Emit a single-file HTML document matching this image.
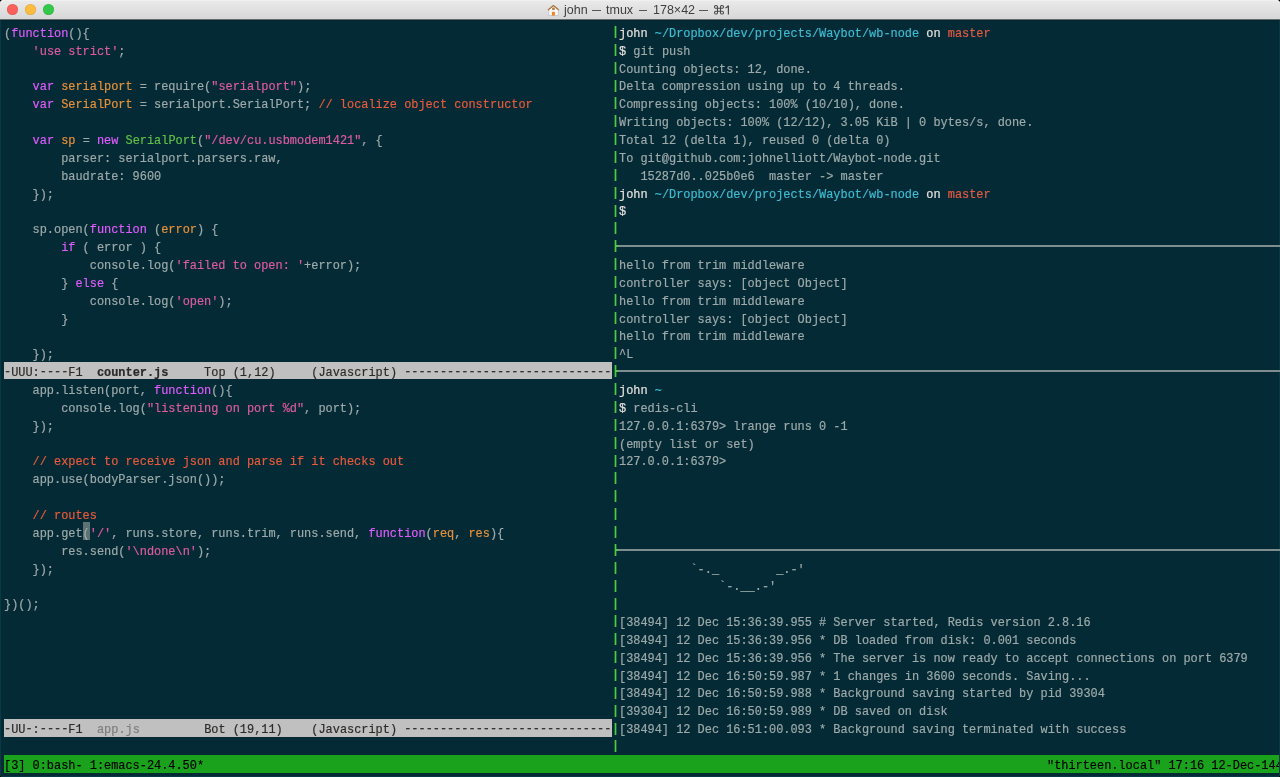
<!DOCTYPE html>
<html><head><meta charset="utf-8"><style>
html,body{margin:0;padding:0;}
body{width:1280px;height:777px;overflow:hidden;position:relative;background:#042a35;font-family:"Liberation Mono",monospace;}
#tb{position:absolute;left:0;top:0;width:1280px;height:19px;background:linear-gradient(#f3f3f3 0px,#e9e9e9 1.5px,#d7d7d7 19px);}
#tbl{position:absolute;left:0;top:19px;width:1280px;height:1px;background:#646c6e;}
#tbl2{position:absolute;left:0;top:20px;width:1280px;height:1px;background:#03252f;}
.tl{position:absolute;top:4px;width:11px;height:11px;border-radius:50%;box-shadow:inset 0 0 0 0.6px rgba(0,0,0,0.12)}
.dash{position:absolute;top:10px;height:1.1px;width:8.6px;background:#555}
.tt{will-change:transform;position:absolute;top:3px;font-family:"Liberation Sans",sans-serif;font-size:12.5px;color:#404040;line-height:14px;white-space:pre}
.row{-webkit-text-stroke:0.18px currentColor;will-change:transform;position:absolute;white-space:pre;font-size:11.910px;line-height:17.86px;height:17.86px;color:#9eaaaa;}
.mlbg{position:absolute;background:#c0c0c0;width:607.50px;}
.v{color:#e05cff} .o{color:#e8913a} .s{color:#de5ba0} .g{color:#5fc046} .c{color:#ea5a3c}
.w{color:#e6e2de} .cy{color:#3fbcd2} .r{color:#e85a44}
.cur{background:#5b6e70;color:#1f3a40}
.md{color:#2c2a28} .dd{color:#2c2a28;position:relative;top:-1px} .mb{color:#2a2a2a;font-weight:bold} .mg{color:#7d7d7d}
.vb{position:absolute;left:615px;width:1px;height:12px;background:#4ccd3e;box-shadow:-1px 0 0 rgba(76,205,62,0.35),1px 0 0 rgba(76,205,62,0.35)}
.hb{position:absolute;left:618px;height:2px;width:662px;background:#7f8d8f;}
.hbg{position:absolute;left:615px;height:2px;width:3px;background:#4ccd3e;}
#sb{position:absolute;left:4.0px;top:755px;width:1275.0px;height:17.6px;background:#1ba21c;overflow:hidden;}
#sb .row{color:#000;top:3px}

#lb{position:absolute;left:0;top:20px;width:1px;height:757px;background:#073a47;}
#rb{position:absolute;left:1279px;top:20px;width:1px;height:757px;background:#073a47;}
#bb{position:absolute;left:0;top:776px;width:1280px;height:1px;background:#073a47;}
.px{position:absolute;width:1px;height:1px}
</style></head><body>
<div id="tb"></div><div id="tbl"></div><div id="tbl2"></div>
<div class="tl" style="left:7px;background:#fc605c"></div>
<div class="tl" style="left:25px;background:#fdbc40"></div>
<div class="tl" style="left:43px;background:#34c84a"></div>
<svg style="position:absolute;left:0;top:0" width="1280" height="19"><path d="M548.6 15.6 L548.6 9.6 L553.4 5.8 L558.4 9.6 L558.4 15.6 Z" fill="#f7f7f9" stroke="#b8b8b8" stroke-width="0.6"/><path d="M548.3 9.7 L553.4 5.6 L558.5 9.7" fill="none" stroke="#a67a42" stroke-width="1.3" stroke-linecap="round" stroke-linejoin="round"/><rect x="552.2" y="7.6" width="2.5" height="2.4" fill="#b07a3e"/><rect x="551.9" y="11.8" width="3" height="3.9" fill="#ef861f"/></svg>
<span class="tt" style="left:563.5px">john</span><div class="dash" style="left:592.3px"></div><span class="tt" style="left:606px">tmux</span><div class="dash" style="left:638.6px"></div><span class="tt" style="left:653px">178×42</span><div class="dash" style="left:699.4px"></div><svg style="position:absolute;left:714px;top:5px" width="10" height="9.6" viewBox="0 0 10 10" preserveAspectRatio="none"><path d="M3.5 6 V2 A1.5 1.5 0 1 0 2 3.5 H8 A1.5 1.5 0 1 0 6.5 2 V8 A1.5 1.5 0 1 0 8 6.5 H2 A1.5 1.5 0 1 0 3.5 8 Z" fill="none" stroke="#4a4a4a" stroke-width="1.05"/></svg><svg style="position:absolute;left:724px;top:4px" width="8" height="12"><path d="M4.4 1.6 V10.4 M1.4 4 Q3.4 3.2 4.4 1.6" fill="none" stroke="#4a4a4a" stroke-width="1.2"/></svg>
<div id="lb"></div><div id="rb"></div><div id="bb"></div><div class="px" style="left:0;top:0;background:#000"></div><div class="px" style="left:1px;top:0;background:#888"></div><div class="px" style="left:0;top:1px;background:#888"></div><div class="px" style="left:1px;top:1px;background:#fff"></div><div class="px" style="left:1279px;top:0;background:#000"></div><div class="px" style="left:1278px;top:0;background:#888"></div><div class="px" style="left:1279px;top:1px;background:#888"></div><div class="px" style="left:1278px;top:1px;background:#fff"></div><div class="px" style="left:0;top:776px;background:#000"></div><div class="px" style="left:1279px;top:776px;background:#000"></div>
<div style="position:absolute;left:82.62px;top:522.48px;width:7.15px;height:17.86px;background:#5d7274"></div><div class="row" style="top:26px;left:4.0px">(<span class="v">function</span>(){</div><div class="row" style="top:44px;left:4.0px">    <span class="s">'use strict'</span>;</div><div class="row" style="top:79px;left:4.0px">    <span class="v">var</span> <span class="o">serialport</span> = require(<span class="s">"serialport"</span>);</div><div class="row" style="top:97px;left:4.0px">    <span class="v">var</span> <span class="o">SerialPort</span> = serialport.SerialPort; <span class="c">// localize object constructor</span></div><div class="row" style="top:133px;left:4.0px">    <span class="v">var</span> <span class="o">sp</span> = <span class="v">new</span> <span class="g">SerialPort</span>(<span class="s">"/dev/cu.usbmodem1421"</span>, {</div><div class="row" style="top:151px;left:4.0px">        parser: serialport.parsers.raw,</div><div class="row" style="top:169px;left:4.0px">        baudrate: 9600</div><div class="row" style="top:187px;left:4.0px">    });</div><div class="row" style="top:222px;left:4.0px">    sp.open(<span class="v">function</span> (<span class="o">error</span>) {</div><div class="row" style="top:240px;left:4.0px">        <span class="v">if</span> ( error ) {</div><div class="row" style="top:258px;left:4.0px">            console.log(<span class="s">'failed to open: '</span>+error);</div><div class="row" style="top:276px;left:4.0px">        } <span class="v">else</span> {</div><div class="row" style="top:294px;left:4.0px">            console.log(<span class="s">'open'</span>);</div><div class="row" style="top:312px;left:4.0px">        }</div><div class="row" style="top:347px;left:4.0px">    });</div><div class="row" style="top:383px;left:4.0px">    app.listen(port, <span class="v">function</span>(){</div><div class="row" style="top:401px;left:4.0px">        console.log(<span class="s">"listening on port %d"</span>, port);</div><div class="row" style="top:419px;left:4.0px">    });</div><div class="row" style="top:454px;left:4.0px">    <span class="c">// expect to receive json and parse if it checks out</span></div><div class="row" style="top:472px;left:4.0px">    app.use(bodyParser.json());</div><div class="row" style="top:508px;left:4.0px">    <span class="c">// routes</span></div><div class="row" style="top:526px;left:4.0px">    app.get(<span class="s">'/'</span>, runs.store, runs.trim, runs.send, <span class="v">function</span>(<span class="o">req</span>, <span class="o">res</span>){</div><div class="row" style="top:544px;left:4.0px">        res.send(<span class="s">'\ndone\n'</span>);</div><div class="row" style="top:562px;left:4.0px">    });</div><div class="row" style="top:597px;left:4.0px">})();</div><div class="mlbg" style="top:361.74px;left:4.0px;height:17.4px"></div><div class="row" style="top:365px;left:4.0px"><span class="dd">-</span><span class="md">UUU:</span><span class="dd">----</span><span class="md">F1  </span><span class="mb">counter.js</span><span class="md">     Top (1,12)     (Javascript) </span><span class="dd">-----------------------------</span></div><div class="mlbg" style="top:718.94px;left:4.0px;height:17.86px"></div><div class="row" style="top:722px;left:4.0px"><span class="dd">-</span><span class="md">UU</span><span class="dd">-</span><span class="md">:</span><span class="dd">----</span><span class="md">F1  </span><span class="mg">app.js</span><span class="md">         Bot (19,11)    (Javascript) </span><span class="dd">-----------------------------</span></div><div class="row" style="top:26px;left:618.64px"><span class="w">john</span> <span class="cy">~/Dropbox/dev/projects/Waybot/wb-node</span> <span class="w">on</span> <span class="r">master</span></div><div class="row" style="top:44px;left:618.64px"><span class="w">$</span> git push</div><div class="row" style="top:62px;left:618.64px">Counting objects: 12, done.</div><div class="row" style="top:79px;left:618.64px">Delta compression using up to 4 threads.</div><div class="row" style="top:97px;left:618.64px">Compressing objects: 100% (10/10), done.</div><div class="row" style="top:115px;left:618.64px">Writing objects: 100% (12/12), 3.05 KiB | 0 bytes/s, done.</div><div class="row" style="top:133px;left:618.64px">Total 12 (delta 1), reused 0 (delta 0)</div><div class="row" style="top:151px;left:618.64px">To git@github.com:johnelliott/Waybot-node.git</div><div class="row" style="top:169px;left:618.64px">   15287d0..025b0e6  master -&gt; master</div><div class="row" style="top:187px;left:618.64px"><span class="w">john</span> <span class="cy">~/Dropbox/dev/projects/Waybot/wb-node</span> <span class="w">on</span> <span class="r">master</span></div><div class="row" style="top:204px;left:618.64px"><span class="w">$</span></div><div class="row" style="top:258px;left:618.64px">hello from trim middleware</div><div class="row" style="top:276px;left:618.64px">controller says: [object Object]</div><div class="row" style="top:294px;left:618.64px">hello from trim middleware</div><div class="row" style="top:312px;left:618.64px">controller says: [object Object]</div><div class="row" style="top:329px;left:618.64px">hello from trim middleware</div><div class="row" style="top:347px;left:618.64px">^L</div><div class="row" style="top:383px;left:618.64px"><span class="w">john</span> <span class="cy">~</span></div><div class="row" style="top:401px;left:618.64px"><span class="w">$</span> redis-cli</div><div class="row" style="top:419px;left:618.64px">127.0.0.1:6379&gt; lrange runs 0 -1</div><div class="row" style="top:437px;left:618.64px">(empty list or set)</div><div class="row" style="top:454px;left:618.64px">127.0.0.1:6379&gt;</div><div class="row" style="top:562px;left:618.64px">          `-._        _.-'</div><div class="row" style="top:579px;left:618.64px">              `-.__.-'</div><div class="row" style="top:615px;left:618.64px">[38494] 12 Dec 15:36:39.955 # Server started, Redis version 2.8.16</div><div class="row" style="top:633px;left:618.64px">[38494] 12 Dec 15:36:39.956 * DB loaded from disk: 0.001 seconds</div><div class="row" style="top:651px;left:618.64px">[38494] 12 Dec 15:36:39.956 * The server is now ready to accept connections on port 6379</div><div class="row" style="top:669px;left:618.64px">[38494] 12 Dec 16:50:59.987 * 1 changes in 3600 seconds. Saving...</div><div class="row" style="top:686px;left:618.64px">[38494] 12 Dec 16:50:59.988 * Background saving started by pid 39304</div><div class="row" style="top:704px;left:618.64px">[39304] 12 Dec 16:50:59.989 * DB saved on disk</div><div class="row" style="top:722px;left:618.64px">[38494] 12 Dec 16:51:00.093 * Background saving terminated with success</div>
<div class="vb" style="top:26px"></div><div class="vb" style="top:44px"></div><div class="vb" style="top:62px"></div><div class="vb" style="top:80px"></div><div class="vb" style="top:97px"></div><div class="vb" style="top:115px"></div><div class="vb" style="top:133px"></div><div class="vb" style="top:151px"></div><div class="vb" style="top:169px"></div><div class="vb" style="top:187px"></div><div class="vb" style="top:205px"></div><div class="vb" style="top:222px"></div><div class="vb" style="top:240px"></div><div class="hb" style="top:245px"></div><div class="hbg" style="top:245px"></div><div class="vb" style="top:258px"></div><div class="vb" style="top:276px"></div><div class="vb" style="top:294px"></div><div class="vb" style="top:312px"></div><div class="vb" style="top:330px"></div><div class="vb" style="top:347px"></div><div class="vb" style="top:365px"></div><div class="hb" style="top:370px"></div><div class="hbg" style="top:370px"></div><div class="vb" style="top:383px"></div><div class="vb" style="top:401px"></div><div class="vb" style="top:419px"></div><div class="vb" style="top:437px"></div><div class="vb" style="top:455px"></div><div class="vb" style="top:472px"></div><div class="vb" style="top:490px"></div><div class="vb" style="top:508px"></div><div class="vb" style="top:526px"></div><div class="vb" style="top:544px"></div><div class="hb" style="top:549px"></div><div class="hbg" style="top:549px"></div><div class="vb" style="top:562px"></div><div class="vb" style="top:580px"></div><div class="vb" style="top:598px"></div><div class="vb" style="top:615px"></div><div class="vb" style="top:633px"></div><div class="vb" style="top:651px"></div><div class="vb" style="top:669px"></div><div class="vb" style="top:687px"></div><div class="vb" style="top:705px"></div><div class="vb" style="top:723px"></div><div class="vb" style="top:740px"></div>
<div id="sb"><div class="row" style="left:0">[3] 0:bash- 1:emacs-24.4.50*</div><div class="row" style="left:1043.46px">&quot;thirteen.local&quot; 17:16 12-Dec-144</div></div>
</body></html>
